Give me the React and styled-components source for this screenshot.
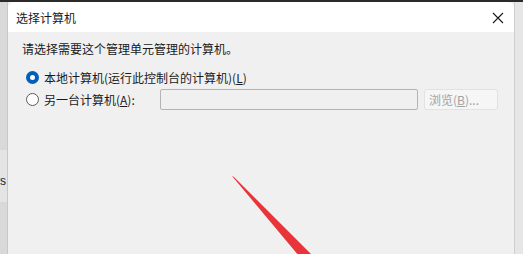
import React from 'react'
import styled, { createGlobalStyle } from 'styled-components'

const GlobalStyle = createGlobalStyle`
  html, body {
    margin: 0;
    padding: 0;
    width: 523px;
    height: 254px;
    overflow: hidden;
    background: #2a2a2a;
    font-family: "Noto Sans CJK SC", "Noto Sans", sans-serif;
  }
`

function App() {
  return (
    <>
      <GlobalStyle />
      <StScreen>
        <StLeftStrip>
          <StBehindText>vs</StBehindText>
        </StLeftStrip>
        <StDialog>
          <StTitleBar>
            <StTitle>选择计算机</StTitle>
            <StClose>
              <svg width="12" height="12" viewBox="0 0 12 12">
                <path d="M1 1 L11 11 M11 1 L1 11" stroke="#1a1a1a" strokeWidth="1.1" />
              </svg>
            </StClose>
          </StTitleBar>
          <StBody>
            <StPrompt>请选择需要这个管理单元管理的计算机。</StPrompt>
            <StOptions>
              <StOption>
                <StRadio $checked />
                <StLabel>本地计算机(运行此控制台的计算机)(<u>L</u>)</StLabel>
              </StOption>
              <StOption>
                <StRadio />
                <StLabel $w="116px">另一台计算机(<u>A</u>):</StLabel>
                <StInput />
                <StBrowse>浏览(<u>B</u>)...</StBrowse>
              </StOption>
            </StOptions>
          </StBody>
        </StDialog>
        <StRightStrip />
        <StArrow width="100" height="80" viewBox="0 0 100 80">
          <polygon points="0,0 2,1 81,80 67,80" fill="#e8353a" />
        </StArrow>
      </StScreen>
    </>
  )
}

export default App

const StScreen = styled.div`
  position: relative;
  display: flex;
  width: 523px;
  height: 252px;
  margin-top: 2px;
  background: #f0f0f0;
`

const StLeftStrip = styled.div`
  width: 7px;
  flex-shrink: 0;
  background: linear-gradient(#d9d9d9 0, #d9d9d9 148px, #e4e4e4 148px, #e4e4e4 200px, #d9d9d9 200px);
  border-right: 1px solid #c8c8c8;
  overflow: hidden;
`

const StBehindText = styled.div`
  margin-left: -6px;
  margin-top: 172px;
  font-family: "Liberation Sans", sans-serif;
  font-size: 12px;
  line-height: 14px;
  color: #222;
`

const StRightStrip = styled.div`
  width: 8px;
  flex-shrink: 0;
  background: #e6e6e6;
  border-left: 1px solid #cfcfcf;
`

const StDialog = styled.div`
  flex: 1;
  display: flex;
  flex-direction: column;
  background: #f0f0f0;
  border-top-left-radius: 6px;
  border-top-right-radius: 6px;
  overflow: hidden;
`

const StTitleBar = styled.div`
  height: 30px;
  display: flex;
  align-items: center;
  justify-content: space-between;
  background: #ffffff;
  padding: 0 10px 0 8px;
`

const StTitle = styled.div`
  font-size: 12px;
  color: #1a1a1a;
`

const StClose = styled.div`
  display: flex;
  align-items: center;
  padding-top: 1px;
`

const StBody = styled.div`
  flex: 1;
  padding: 8px 0 0 14px;
`

const StPrompt = styled.div`
  font-size: 12px;
  color: #1a1a1a;
  line-height: 17px;
`

const StOptions = styled.div`
  display: flex;
  flex-direction: column;
  margin-top: 10px;
  margin-left: 4px;
  gap: 2px;
`

const StOption = styled.div`
  display: flex;
  align-items: center;
  height: 20px;
`

const StRadio = styled.span`
  box-sizing: border-box;
  flex-shrink: 0;
  width: 13px;
  height: 13px;
  border-radius: 50%;
  margin-right: 5px;
  background: #ffffff;
  border: ${p => (p.$checked ? '4px solid #005fb8' : '1px solid #5a5a5a')};
`

const StLabel = styled.span`
  font-size: 12px;
  color: #1a1a1a;
  white-space: nowrap;
  flex-shrink: 0;
  width: ${p => p.$w || 'auto'};
`

const StInput = styled.div`
  box-sizing: border-box;
  flex-shrink: 0;
  width: 258px;
  height: 21px;
  border: 1px solid #b4b4b4;
  border-radius: 2px;
  background: #f0f0f0;
`

const StBrowse = styled.div`
  box-sizing: border-box;
  flex-shrink: 0;
  margin-left: 6px;
  width: 74px;
  height: 21px;
  border: 1px solid #e2e2e2;
  border-radius: 3px;
  background: #f6f6f6;
  color: #a2a2a2;
  font-size: 12px;
  display: flex;
  align-items: center;
  padding-left: 4px;
`

const StArrow = styled.svg`
  position: absolute;
  left: 232px;
  top: 174px;
`
